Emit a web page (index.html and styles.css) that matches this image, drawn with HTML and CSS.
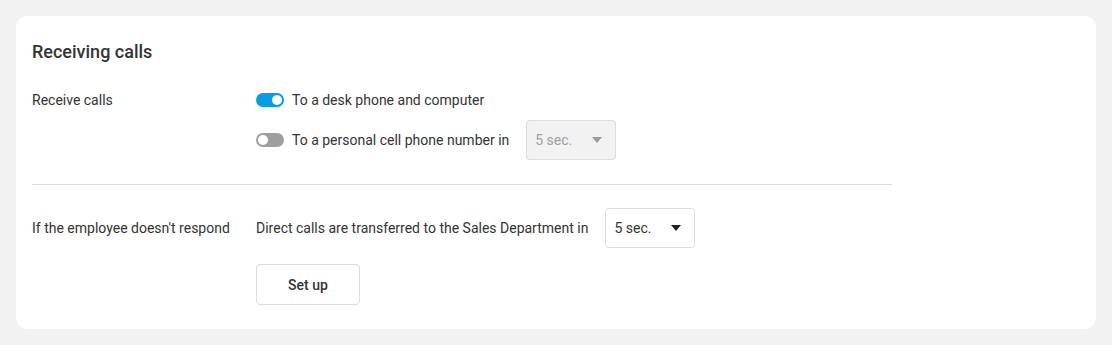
FILE: index.html
```html
<!DOCTYPE html>
<html lang="en">
<head>
    <meta charset="UTF-8">
    <title>Receiving calls</title>
    <link rel="stylesheet" href="styles.css">
</head>
<body>
    <div class="card">
        <h2>Receiving calls</h2>
        <div class="row receive-row">
            <div class="label">Receive calls</div>
            <div class="options">
                <div class="option">
                    <span class="toggle on"></span>
                    <span>To a desk phone and computer</span>
                </div>
                <div class="option option-select">
                    <span class="toggle"></span>
                    <span>To a personal cell phone number in</span>
                    <div class="select disabled">5 sec.<span class="caret"></span></div>
                </div>
            </div>
        </div>
        <div class="divider"></div>
        <div class="row respond-row">
            <div class="label">If the employee doesn't respond</div>
            <div class="options">
                <div class="option option-select">
                    <span>Direct calls are transferred to the Sales Department in</span>
                    <div class="select">5 sec.<span class="caret"></span></div>
                </div>
                <button class="btn">Set up</button>
            </div>
        </div>
    </div>
</body>
</html>
```

FILE: styles.css
```css
body {
    margin: 0;
    padding: 16px;
    background-color: #f1f2f1;
    font-family: Roboto, Arial, sans-serif;
    font-size: 14px;
    color: #333;
}
.card {
    background-color: white;
    border-radius: 12px;
    padding: 24px 16px;
    height: 313px;
    box-sizing: border-box;
}
h2 {
    font-size: 18px;
    font-weight: 500;
    margin: 0;
    line-height: 24px;
    color: #333;
}
.row {
    display: flex;
    width: 860px;
}
.label {
    width: 224px;
    flex-shrink: 0;
    line-height: 20px;
}
.options {
    display: flex;
    flex-direction: column;
    align-items: flex-start;
}
.option {
    display: flex;
    align-items: center;
    gap: 8px;
    line-height: 20px;
}
.option-select .select {
    margin-left: 9px;
}
.select {
    display: flex;
    align-items: center;
    justify-content: space-between;
    box-sizing: border-box;
    width: 90px;
    height: 40px;
    padding: 0 13px 0 8px;
    border: 1px solid #dcdcdc;
    border-radius: 4px;
    color: #333;
}
.select.disabled {
    background-color: #f2f2f2;
    color: #a0a0a0;
}
.caret {
    width: 0;
    height: 0;
    border-left: 5px solid transparent;
    border-right: 5px solid transparent;
    border-top: 6px solid #222;
}
.select.disabled .caret {
    border-top-color: #9a9a9a;
}
.toggle {
    position: relative;
    width: 28px;
    height: 14px;
    border-radius: 7px;
    background-color: #9e9e9e;
}
.toggle.on {
    background-color: #0a9be0;
}
.toggle::after {
    content: "";
    position: absolute;
    top: 2px;
    left: 2px;
    width: 10px;
    height: 10px;
    border-radius: 50%;
    background-color: white;
}
.toggle.on::after {
    left: 16px;
}
.divider {
    width: 860px;
    height: 1px;
    margin-top: 24px;
    background-color: #dcdcdc;
}
.receive-row {
    margin-top: 26px;
}
.receive-row .option-select {
    margin-top: 10px;
}
.respond-row {
    margin-top: 23px;
}
.respond-row .label {
    line-height: 40px;
}
.btn {
    width: 104px;
    height: 41px;
    margin-top: 16px;
    background-color: white;
    border: 1px solid #dcdcdc;
    border-radius: 4px;
    font-family: inherit;
    font-size: 14px;
    font-weight: 500;
    color: #333;
}
```
